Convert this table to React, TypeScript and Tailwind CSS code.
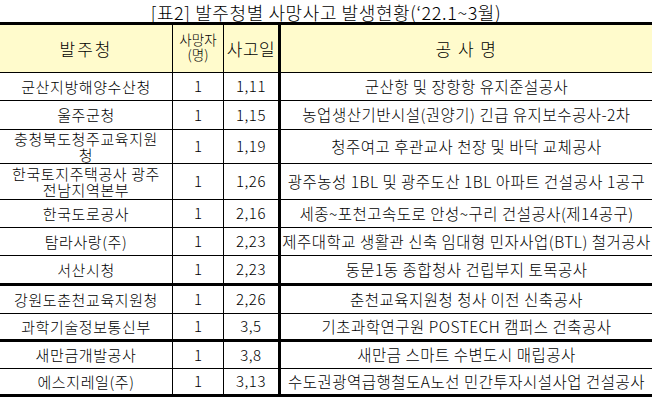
import React from "react";

type Row = {
  org: string[];
  n: string;
  d: string;
  name: string;
  h: string;
  b: string;
};

const thin = "border-b border-black";
const thick = "border-b-[3px] border-black";

const rows: Row[] = [
  { org: ["군산지방해양수산청"], n: "1", d: "1,11", name: "군산항 및 장항항 유지준설공사", h: "h-[28px]", b: thin },
  { org: ["울주군청"], n: "1", d: "1,15", name: "농업생산기반시설(권양기) 긴급 유지보수공사-2차", h: "h-[29px]", b: thin },
  { org: ["충청북도청주교육지원", "청"], n: "1", d: "1,19", name: "청주여고 후관교사 천장 및 바닥 교체공사", h: "h-[34px]", b: thin },
  { org: ["한국토지주택공사 광주", "전남지역본부"], n: "1", d: "1,26", name: "광주농성 1BL 및 광주도산 1BL 아파트 건설공사 1공구", h: "h-[36px]", b: thin },
  { org: ["한국도로공사"], n: "1", d: "2,16", name: "세종~포천고속도로 안성~구리 건설공사(제14공구)", h: "h-[28px]", b: thin },
  { org: ["탐라사랑(주)"], n: "1", d: "2,23", name: "제주대학교 생활관 신축 임대형 민자사업(BTL) 철거공사", h: "h-[28px]", b: thin },
  { org: ["서산시청"], n: "1", d: "2,23", name: "동문1동 종합청사 건립부지 토목공사", h: "h-[30px]", b: thick },
  { org: ["강원도춘천교육지원청"], n: "1", d: "2,26", name: "춘천교육지원청 청사 이전 신축공사", h: "h-[28px]", b: thin },
  { org: ["과학기술정보통신부"], n: "1", d: "3,5", name: "기초과학연구원 POSTECH 캠퍼스 건축공사", h: "h-[28px]", b: thick },
  { org: ["새만금개발공사"], n: "1", d: "3,8", name: "새만금 스마트 수변도시 매립공사", h: "h-[27px]", b: thin },
  { org: ["에스지레일(주)"], n: "1", d: "3,13", name: "수도권광역급행철도A노선 민간투자시설사업 건설공사", h: "h-[28px]", b: thick },
];

const font = { fontFamily: '"Noto Sans CJK KR", "Noto Sans", sans-serif' };

export default function App() {
  return (
    <div className="w-[652px] h-[414px] bg-white text-black overflow-hidden font-light" style={font}>
      <div className="h-[22px] flex items-center justify-center pt-[2px] text-[18px] leading-none tracking-[0.6px]">
        [표2] 발주청별 사망사고 발생현황(‘22.1~3월)
      </div>
      <div className="border-t-[3px] border-black">
        <div className={`grid grid-cols-[173px_51px_57px_1fr] h-[48px] bg-[#fffbcc] ${thin}`}>
          <div className="border-r border-black flex items-center justify-center text-[17px] tracking-[2px]">발주청</div>
          <div className="border-r border-black flex flex-col items-center justify-center text-[13.5px] leading-[15px] pb-[4px]">
            <span className="block">사망자</span>
            <span className="block">(명)</span>
          </div>
          <div className="border-r-[3px] border-black flex items-center justify-center text-[17px] tracking-[0.5px]">사고일</div>
          <div className="flex items-center justify-center text-[17px] tracking-[1.5px] whitespace-pre">공 사 명</div>
        </div>
        {rows.map((r, i) => (
          <div key={i} className={`grid grid-cols-[173px_51px_57px_1fr] ${r.h} ${r.b}`}>
            <div className="border-r border-black flex flex-col items-center justify-center text-[15px] leading-[16px] tracking-[0.6px] whitespace-nowrap">
              {r.org.map((t, j) => (
                <span key={j} className="block">{t}</span>
              ))}
            </div>
            <div className="border-r border-black flex items-center justify-center text-[15px]">{r.n}</div>
            <div className="border-r-[3px] border-black flex items-center justify-center text-[15px] tracking-[0.5px]">{r.d}</div>
            <div className="flex items-center justify-center text-[15.5px] tracking-[0.5px] whitespace-nowrap">{r.name}</div>
          </div>
        ))}
      </div>
    </div>
  );
}
